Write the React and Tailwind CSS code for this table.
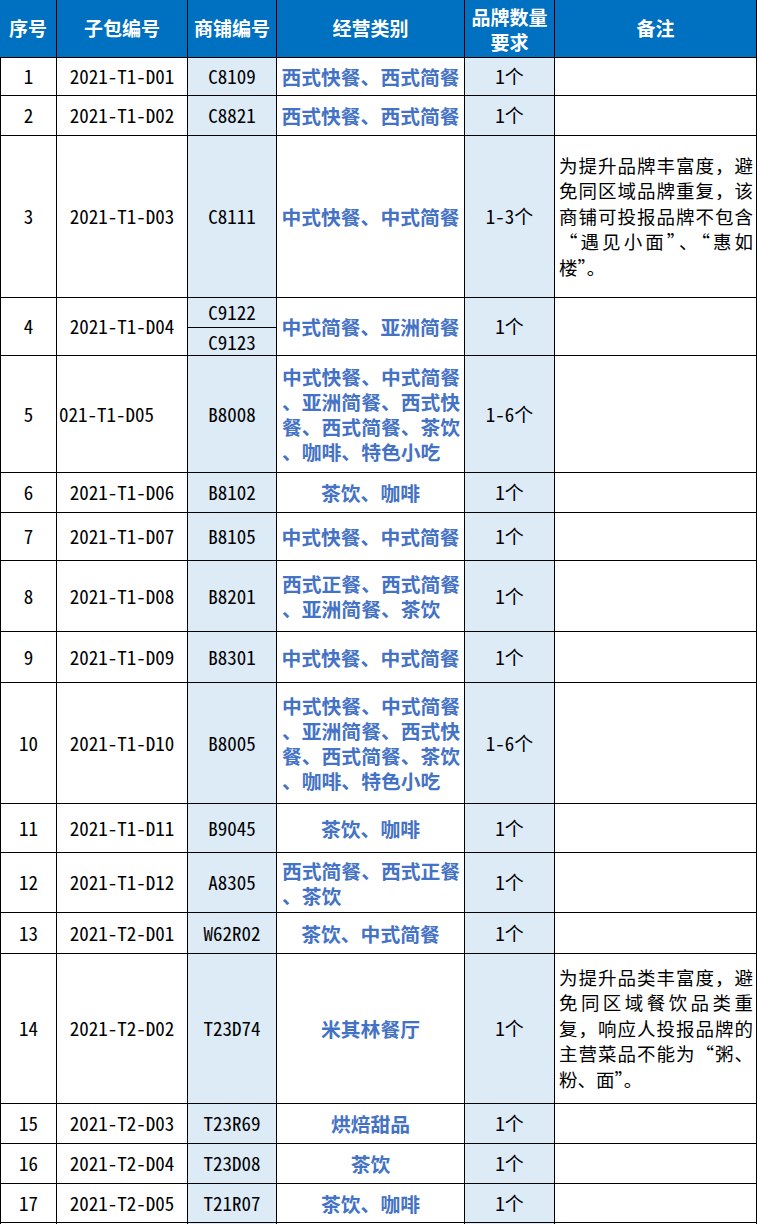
import React from "react";

const rows = [
  { n: "1", code: "2021-T1-D01", shop: "C8109", cat: ["西式快餐、西式简餐"], qty: "1个", h: "h-[38px]" },
  { n: "2", code: "2021-T1-D02", shop: "C8821", cat: ["西式快餐、西式简餐"], qty: "1个", h: "h-[40px]" },
  {
    n: "3", code: "2021-T1-D03", shop: "C8111", cat: ["中式快餐、中式简餐"], qty: "1-3个", h: "h-[162px]",
    note: ["为提升品牌丰富度，避", "免同区域品牌重复，该", "商铺可投报品牌不包含", "“遇见小面”、“惠如", "楼”。"],
  },
  { n: "4", code: "2021-T1-D04", shop: ["C9122", "C9123"], cat: ["中式简餐、亚洲简餐"], qty: "1个", h: "h-[58px]" },
  {
    n: "5", code: "021-T1-D05", left: true, shop: "B8008",
    cat: ["中式快餐、中式简餐", "、亚洲简餐、西式快", "餐、西式简餐、茶饮", "、咖啡、特色小吃"], qty: "1-6个", h: "h-[117px]",
  },
  { n: "6", code: "2021-T1-D06", shop: "B8102", cat: ["茶饮、咖啡"], qty: "1个", h: "h-[40px]" },
  { n: "7", code: "2021-T1-D07", shop: "B8105", cat: ["中式快餐、中式简餐"], qty: "1个", h: "h-[48px]" },
  { n: "8", code: "2021-T1-D08", shop: "B8201", cat: ["西式正餐、西式简餐", "、亚洲简餐、茶饮"], qty: "1个", h: "h-[71px]" },
  { n: "9", code: "2021-T1-D09", shop: "B8301", cat: ["中式快餐、中式简餐"], qty: "1个", h: "h-[51px]" },
  {
    n: "10", code: "2021-T1-D10", shop: "B8005",
    cat: ["中式快餐、中式简餐", "、亚洲简餐、西式快", "餐、西式简餐、茶饮", "、咖啡、特色小吃"], qty: "1-6个", h: "h-[121px]",
  },
  { n: "11", code: "2021-T1-D11", shop: "B9045", cat: ["茶饮、咖啡"], qty: "1个", h: "h-[49px]" },
  { n: "12", code: "2021-T1-D12", shop: "A8305", cat: ["西式简餐、西式正餐", "、茶饮"], qty: "1个", h: "h-[60px]" },
  { n: "13", code: "2021-T2-D01", shop: "W62R02", cat: ["茶饮、中式简餐"], qty: "1个", h: "h-[41px]" },
  {
    n: "14", code: "2021-T2-D02", shop: "T23D74", cat: ["米其林餐厅"], qty: "1个", h: "h-[150px]",
    note: ["为提升品类丰富度，避", "免同区域餐饮品类重", "复，响应人投报品牌的", "主营菜品不能为“粥、", "粉、面”。"],
  },
  { n: "15", code: "2021-T2-D03", shop: "T23R69", cat: ["烘焙甜品"], qty: "1个", h: "h-[40px]" },
  { n: "16", code: "2021-T2-D04", shop: "T23D08", cat: ["茶饮"], qty: "1个", h: "h-[40px]" },
  { n: "17", code: "2021-T2-D05", shop: "T21R07", cat: ["茶饮、咖啡"], qty: "1个", h: "h-[39px]" },
];

const cell = "border-r border-b border-black flex items-center shrink-0";

function Row({ r }) {
  const multi = r.cat.length > 1;
  return (
    <div className={`flex ${r.h}`}>
      <div className={`${cell} w-[57px] border-l justify-center`}>{r.n}</div>
      <div className={`${cell} w-[131px] ${r.left ? "justify-start pl-[2px]" : "justify-center"}`}>{r.code}</div>
      {Array.isArray(r.shop) ? (
        <div className="w-[89px] shrink-0 flex flex-col border-r border-b border-black bg-[#ddebf7]">
          <div className="h-[32px] border-b border-black flex items-center justify-center">{r.shop[0]}</div>
          <div className="flex-1 flex items-center justify-center">{r.shop[1]}</div>
        </div>
      ) : (
        <div className={`${cell} w-[89px] justify-center bg-[#ddebf7]`}>{r.shop}</div>
      )}
      <div className={`${cell} w-[188px] ${multi ? "justify-start pl-[5px]" : "justify-center"} text-[#4472c4] font-bold text-[19.8px]`}>
        <div className="flex flex-col leading-[25px]">
          {r.cat.map((l, i) => (
            <div key={i} className="whitespace-nowrap">{l}</div>
          ))}
        </div>
      </div>
      <div className={`${cell} w-[90px] justify-center bg-[#ddebf7]`}>{r.qty}</div>
      <div className={`${cell} w-[202px] pl-[4px] pr-[3px]`}>
        {r.note && (
          <div className="flex flex-col w-full leading-[25.5px] text-[18.5px]">
            {r.note.map((l, i) => (
              <div
                key={i}
                className={`whitespace-nowrap ${i < r.note.length - 1 ? "text-justify [text-align-last:justify]" : "text-left"}`}
              >
                {l}
              </div>
            ))}
          </div>
        )}
      </div>
    </div>
  );
}

export default function App() {
  return (
    <div className="w-[757px] bg-white text-black text-[19px] font-['Noto_Sans_Mono_CJK_SC','Noto_Sans_CJK_SC',monospace]">
      <div className="flex h-[58px] bg-[#0070c0] text-white font-bold">
        <div className="w-[57px] shrink-0 border-r border-b border-black flex items-center justify-center">序号</div>
        <div className="w-[131px] shrink-0 border-r border-b border-black flex items-center justify-center">子包编号</div>
        <div className="w-[89px] shrink-0 border-r border-b border-black flex items-center justify-center">商铺编号</div>
        <div className="w-[188px] shrink-0 border-r border-b border-black flex items-center justify-center">经营类别</div>
        <div className="w-[90px] shrink-0 border-r border-b border-black flex flex-col items-center justify-center leading-[25px]">
          <div>品牌数量</div>
          <div>要求</div>
        </div>
        <div className="w-[202px] shrink-0 border-r border-b border-black flex items-center justify-center">备注</div>
      </div>
      {rows.map((r) => (
        <Row key={r.n} r={r} />
      ))}
      <div className="flex h-[30px]">
        <div className={`${cell} w-[57px] border-l`}></div>
        <div className={`${cell} w-[131px]`}></div>
        <div className={`${cell} w-[89px] bg-[#ddebf7]`}></div>
        <div className={`${cell} w-[188px]`}></div>
        <div className={`${cell} w-[90px] bg-[#ddebf7]`}></div>
        <div className={`${cell} w-[202px]`}></div>
      </div>
    </div>
  );
}
